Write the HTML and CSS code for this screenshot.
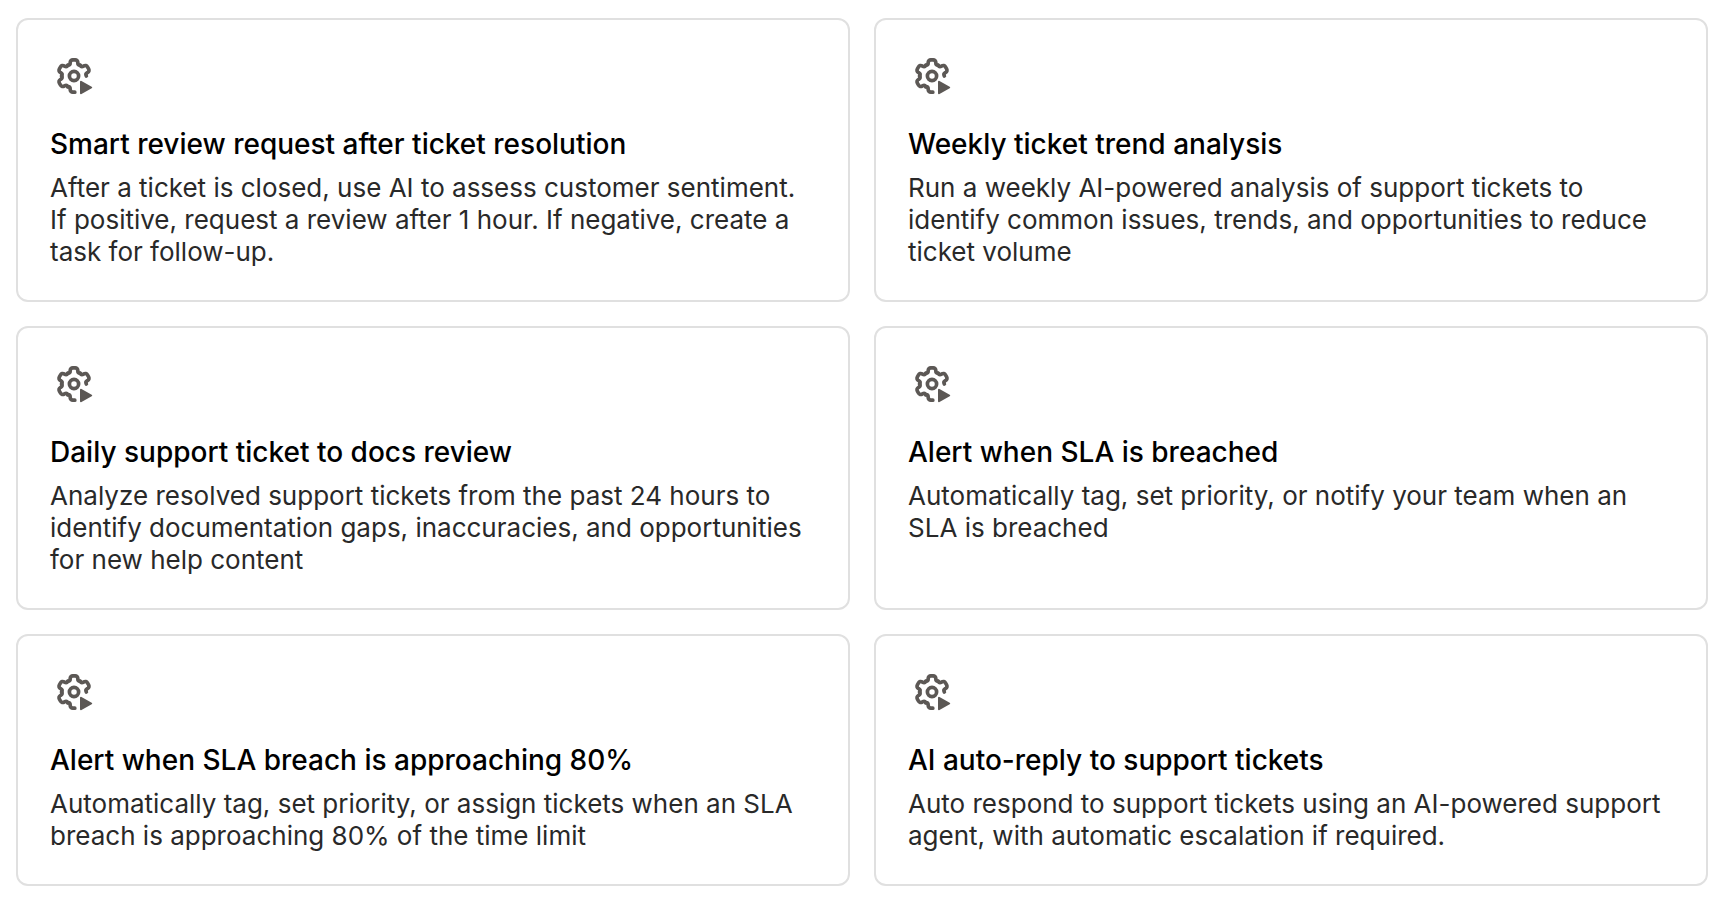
FILE: index.html
```html
<!DOCTYPE html>
<html lang="en">
<head>
  <meta charset="utf-8">
  <title>Automation templates</title>
  <link rel="stylesheet" href="styles.css">
</head>
<body>

  <!-- gear with play arrow, shared by every card -->
  <svg class="sprite" aria-hidden="true">
    <symbol id="gear-play" viewBox="0 0 24 24">
      <g fill="none" stroke="currentColor" stroke-width="1.85" stroke-linecap="round" stroke-linejoin="round">
        <circle cx="12" cy="12" r="2.3"/>
        <path id="tooth" d="M8.9 6.65C9.6 6.65 10.1 6.1 10.1 5.4V5.2A1.3 1.3 0 0 1 11.4 3.9H12.6A1.3 1.3 0 0 1 13.9 5.2V5.4C13.9 6.1 14.4 6.65 15.1 6.65"/>
        <use href="#tooth" transform="rotate(60 12 12)"/>
        <use href="#tooth" transform="rotate(-60 12 12)"/>
        <use href="#tooth" transform="rotate(-120 12 12)"/>
        <path d="M8.9 17.35C9.6 17.35 10.1 17.9 10.1 18.6V18.8A1.3 1.3 0 0 0 11.4 20.1H12.4"/>
      </g>
      <path d="M15.5 14.9V20.6L20.6 17.75Z" fill="currentColor" stroke="currentColor" stroke-linejoin="round"/>
    </symbol>
  </svg>

  <main class="cards">
    <article class="card">
      <svg class="icon" aria-hidden="true"><use href="#gear-play"/></svg>
      <h2>Smart review request after ticket resolution</h2>
      <p>After a ticket is closed, use AI to assess customer sentiment. If positive, request a review after 1 hour. If negative, create a task for follow-up.</p>
    </article>
    <article class="card">
      <svg class="icon" aria-hidden="true"><use href="#gear-play"/></svg>
      <h2>Weekly ticket trend analysis</h2>
      <p>Run a weekly AI-powered analysis of support tickets to identify common issues, trends, and opportunities to reduce ticket volume</p>
    </article>
    <article class="card">
      <svg class="icon" aria-hidden="true"><use href="#gear-play"/></svg>
      <h2>Daily support ticket to docs review</h2>
      <p>Analyze resolved support tickets from the past 24 hours to identify documentation gaps, inaccuracies, and opportunities for new help content</p>
    </article>
    <article class="card">
      <svg class="icon" aria-hidden="true"><use href="#gear-play"/></svg>
      <h2>Alert when SLA is breached</h2>
      <p>Automatically tag, set priority, or notify your team when an SLA is breached</p>
    </article>
    <article class="card">
      <svg class="icon" aria-hidden="true"><use href="#gear-play"/></svg>
      <h2>Alert when SLA breach is approaching 80%</h2>
      <p>Automatically tag, set priority, or assign tickets when an SLA breach is approaching 80% of the time limit</p>
    </article>
    <article class="card">
      <svg class="icon" aria-hidden="true"><use href="#gear-play"/></svg>
      <h2>AI auto-reply to support tickets</h2>
      <p>Auto respond to support tickets using an AI-powered support agent, with automatic escalation if required.</p>
    </article>
  </main>

</body>
</html>
```
FILE: styles.css
```css
* { box-sizing: border-box; }
body { margin: 0; background: #fff; font-family: Inter, sans-serif; }
.sprite { position: absolute; width: 0; height: 0; }
.cards { display: grid; grid-template-columns: 1fr 1fr; gap: 24px; padding: 18px 14px 18px 16px; }
.card { padding: 32px; border: 2px solid #e0e0e0; border-radius: 12px; }
.icon { display: block; width: 48px; height: 48px; margin-bottom: 24px; color: #5c5855; }
.card h2 { margin: 0 0 8px; font-size: 28px; line-height: 40px; font-weight: 500; color: #000; }
.card p { margin: 0; font-size: 26px; line-height: 32px; color: #292929; }
```
